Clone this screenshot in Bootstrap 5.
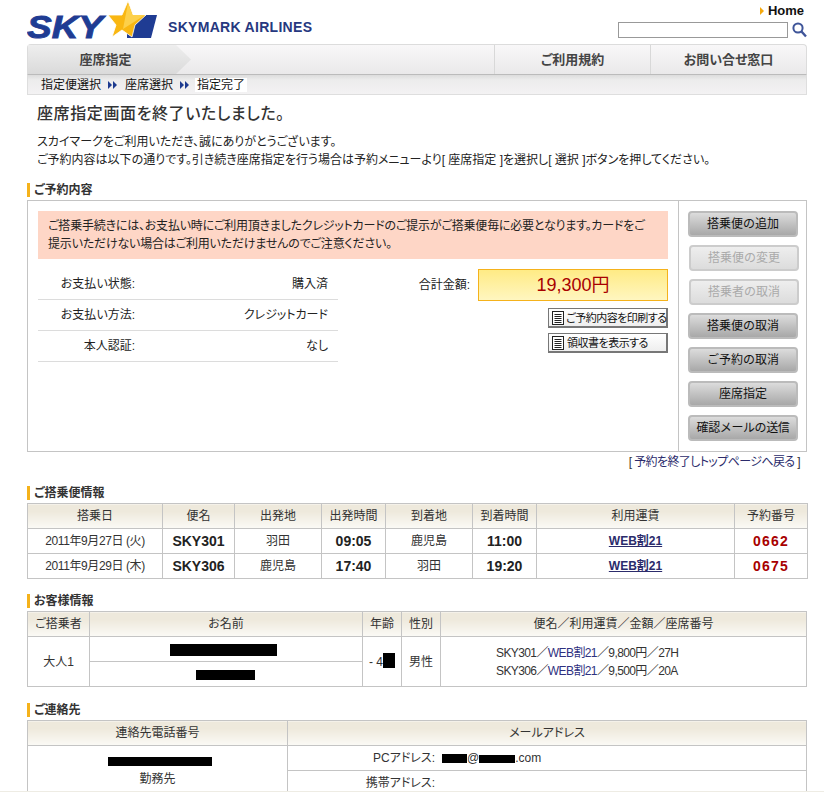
<!DOCTYPE html>
<html lang="ja"><head><meta charset="utf-8"><title>SKYMARK</title>
<link href="https://cdn.jsdelivr.net/npm/bootstrap@5.3.0/dist/css/bootstrap.min.css" rel="stylesheet">
<script src="https://cdn.jsdelivr.net/npm/bootstrap@5.3.0/dist/js/bootstrap.bundle.min.js"></script>
<style>
html,body{background:#fff}
body{font-family:"Liberation Sans","Noto Sans CJK JP",sans-serif;font-size:12px;line-height:18px;color:#222;font-feature-settings:"palt";overflow:hidden}
.clipper{height:792px;overflow:hidden;border-bottom:1px solid #eeece4;padding:0 17px 0 27px}
.top{height:44px}
.logo{width:300px;height:44px;display:block}
.home{font-size:13px;font-weight:700;color:#111;line-height:14px;padding-top:4px;padding-right:3px;text-decoration:none}
.home::before{content:"";display:inline-block;border-left:4px solid #f5a90e;border-top:4px solid transparent;border-bottom:4px solid transparent;margin-right:4px}
.srch{width:170px;height:16px;border:1px solid #999;background:#fff}
.gnav{height:31px;background:linear-gradient(#f8f7f8,#eae9ea);border:1px solid #dcdcdc;border-bottom:1px solid #bbb;border-radius:4px 4px 0 0;color:#444;font-weight:700;font-size:13px}
.gtab{width:163px;background:linear-gradient(#eee,#dadada);clip-path:polygon(0 0,148px 0,163px 50%,148px 100%,0 100%);padding-right:8px}
.gsp{width:303px}
.gitem{border-left:1px solid #d8d8d8}
.gw1{width:156px}.gw2{width:156px}
.sub{height:20px;background:linear-gradient(#dcdcdc,#ececec 25%,#f3f2f3);border:1px solid #dedede;border-top:0;padding-left:13px;color:#111}
.arw{margin:0 8px 0 7px;flex:none}
.cur{background:#fff;padding:0 2px;height:14px;line-height:14px;margin-left:-2px}
.ttl{font-size:16px;line-height:22px;font-weight:500;color:#333;margin:8px 0 0 10px;letter-spacing:.6px}
.lead-txt{margin:8px 0 0 10px;color:#222}
.sect{font-size:12px;line-height:14px;font-weight:700;color:#333;border-left:3px solid #f5b21b;padding-left:4px;margin:0}
.s1{margin-top:14px}.s2{margin-top:15px}.s3{margin-top:15px}.s4{margin-top:16px}
.bx{height:252px;border:1px solid #c4c4c4;margin-top:3px}
.bl{width:650px;padding:10px 10px 0 10px}
.br{width:129px;border-left:1px solid #c4c4c4;padding:10px 0 0 9px;gap:8px}
.notice{background:#fed6c6;height:48px;padding:6px 8px 0 10px;margin:0;color:#222;width:630px;letter-spacing:-.2px}
.dl{width:300px;margin-top:10px}
.dlr{height:31px;border-bottom:1px solid #dcdcdc;padding:0 10px;line-height:30px}
.dlk{width:87px;text-align:right}
.amt{margin-top:10px;width:250px}
.tot{width:190px;height:32px;border:1px solid #f5b21b;background:linear-gradient(#ffeb85,#fff6c0);color:#a80000;font-size:18px;text-align:center;line-height:31px;margin-left:8px}
.pr{width:120px;height:20px;border:1px solid #777;border-right:2px solid #777;border-bottom:2px solid #777;background:linear-gradient(#fff,#eee);color:#111;font-size:11px;line-height:16px;text-decoration:none;padding-left:2px;white-space:nowrap;letter-spacing:-.5px}
.pr1{margin-top:7px}.pr2{margin-top:5px}
.pr svg{margin-right:1px;flex:none}
.pr2 svg{margin-right:2px}
.fbtn{width:110px;height:26px;padding:0;border:2px solid #bbb;border-radius:4px;background:linear-gradient(#dcdcdc,#a8a8a8);color:#111;font-size:12px;line-height:20px;white-space:nowrap}
.fbtn.dis,.fbtn:disabled{background:linear-gradient(#eee,#dcdcdc);color:#aaa;border-color:#ccc;opacity:1;margin-left:1px}
.tight{letter-spacing:-.4px}
.back{text-align:right;color:#333;padding-right:7px;margin:1px 0 0;line-height:18px;letter-spacing:-.6px}
.back a{color:#2b2b6b;text-decoration:none}
.tlink{color:#2e3180;text-decoration:none}
.tt{table-layout:fixed;width:780px;margin:3px 0 0;border-collapse:collapse;font-size:12px}
.tt th,.tt td{border:1px solid #c4c4c4;height:25px;padding:0;text-align:center;vertical-align:middle;line-height:16px;color:#333;font-weight:400}
.tt th{background:linear-gradient(#eee9dc,#eee9dc 30%,#fbfaf6);}
.c135{width:135px}.c72{width:72px}.c87{width:87px}.c64{width:64px}.c87b{width:87px}.c64b{width:64px}.c198{width:198px}.c72b{width:73px}
.c62{width:62px}.c273{width:273px}.c39{width:39px}.c260{width:260px}
.dt{letter-spacing:-.4px}
.tt .bn{font-weight:700;font-size:14px;color:#222}
.tt .rsv{font-weight:700;font-size:14px;color:#a80000;letter-spacing:1.2px}
.fare{font-weight:700;color:#2b2b6b;text-decoration:underline}
.blk{display:inline-block;background:#000;vertical-align:middle}
.b1{width:107px;height:12px;margin-left:-6px}.b2{width:59px;height:10px;margin-left:-2px}.b3{width:12px;height:15px;margin-top:-3px}.b4{width:104px;height:9px;margin:-2px 0 2px 4px}.b5{width:25px;height:9px}.b6{width:36px;height:8px}
.tt td.fl{text-align:left;padding-left:55px;line-height:18px;letter-spacing:-.6px}
.tt td.cl{text-align:left}
.lbl{display:inline-block;width:147px;text-align:right;margin-right:7px}
</style></head><body>
<div class="clipper">
<header class="top d-flex justify-content-between">
<svg class="logo" viewBox="0 0 300 44" role="img" aria-label="SKY SKYMARK AIRLINES">
<polygon points="100,15 130,15 124,38 100,38" fill="#1f3c93"/>
<text x="0" y="38" font-family="Liberation Sans" font-size="32" font-weight="700" font-style="italic" fill="#1f3c93" stroke="#1f3c93" stroke-width=".9" textLength="76" lengthAdjust="spacingAndGlyphs">SKY</text>
<polygon points="101,1 106,15 119,15 108,25 105,37 95,30 85,37 89,25 81,15 95,15" fill="#f9b712" stroke="#fff" stroke-width=".8"/>
<polygon points="101,3 105.500,15 118,15 96,29" fill="#fdd04a"/>
<text x="141" y="32" font-family="Liberation Sans" font-size="14" font-weight="700" letter-spacing=".3" fill="#26387f">SKYMARK AIRLINES</text>
</svg>
<div class="d-flex flex-column align-items-end">
<a class="home" href="#">Home</a>
<div class="d-flex align-items-center gap-1 mt-1">
<input class="srch" type="text" aria-label="search">
<svg width="15" height="16" viewBox="0 0 15 16"><circle cx="6" cy="6" r="4.600" fill="none" stroke="#3f5599" stroke-width="2"/><path d="M9.500 9.500 14 14.500" stroke="#3f5599" stroke-width="2.400"/></svg>
</div></div>
</header>
<nav class="gnav d-flex">
<div class="gtab d-flex align-items-center justify-content-center">座席指定</div>
<div class="gsp"></div>
<div class="gitem gw1 d-flex align-items-center justify-content-center">ご利用規約</div>
<div class="gitem gw2 d-flex align-items-center justify-content-center">お問い合せ窓口</div>
</nav>
<div class="sub d-flex align-items-center">
<span>指定便選択</span><svg class="arw" width="9" height="8" viewBox="0 0 9 8"><path d="M0 0l4 4-4 4zM5 0l4 4-4 4z" fill="#1d3a8f"/></svg><span>座席選択</span><svg class="arw" width="9" height="8" viewBox="0 0 9 8"><path d="M0 0l4 4-4 4zM5 0l4 4-4 4z" fill="#1d3a8f"/></svg><span class="cur">指定完了</span>
</div>
<h1 class="ttl">座席指定画面を終了いたしました。</h1>
<p class="lead-txt">スカイマークをご利用いただき、誠にありがとうございます。<br>ご予約内容は以下の通りです。引き続き座席指定を行う場合は予約メニューより[ 座席指定 ]を選択し[ 選択 ]ボタンを押してください。</p>
<h2 class="sect s1">ご予約内容</h2>
<section class="bx d-flex">
<div class="bl">
<p class="notice">ご搭乗手続きには、お支払い時にご利用頂きましたクレジットカードのご提示がご搭乗便毎に必要となります。カードをご<br>提示いただけない場合はご利用いただけませんのでご注意ください。</p>
<div class="d-flex justify-content-between">
<div class="dl">
<div class="dlr d-flex justify-content-between"><span class="dlk">お支払い状態:</span><span>購入済</span></div>
<div class="dlr d-flex justify-content-between"><span class="dlk">お支払い方法:</span><span>クレジットカード</span></div>
<div class="dlr d-flex justify-content-between"><span class="dlk">本人認証:</span><span>なし</span></div>
</div>
<div class="amt d-flex flex-column align-items-end">
<div class="d-flex align-items-center"><span>合計金額:</span><div class="tot">19,300円</div></div>
<a class="pr pr1 d-flex align-items-center" href="#"><svg width="14" height="14" viewBox="0 0 14 14"><rect x="1.500" y=".5" width="11" height="13" fill="#fff" stroke="#222"/><path d="M3.500 3.500h7M3.500 5.500h7M3.500 7.500h7M3.500 9.500h7M3.500 11.500h7" stroke="#222"/></svg>ご予約内容を印刷する</a>
<a class="pr pr2 d-flex align-items-center" href="#"><svg width="14" height="14" viewBox="0 0 14 14"><rect x="1.500" y=".5" width="11" height="13" fill="#fff" stroke="#222"/><path d="M3.500 3.500h7M3.500 5.500h7M3.500 7.500h7M3.500 9.500h7M3.500 11.500h7" stroke="#222"/></svg>領収書を表示する</a>
</div></div></div>
<div class="br d-flex flex-column">
<button class="btn fbtn">搭乗便の追加</button>
<button class="btn fbtn dis" disabled>搭乗便の変更</button>
<button class="btn fbtn dis" disabled>搭乗者の取消</button>
<button class="btn fbtn">搭乗便の取消</button>
<button class="btn fbtn">ご予約の取消</button>
<button class="btn fbtn">座席指定</button>
<button class="btn fbtn tight">確認メールの送信</button>
</div>
</section>
<p class="back">[ <a href="#">予約を終了しトップページへ戻る</a> ]</p>
<h2 class="sect s2">ご搭乗便情報</h2>
<table class="tt"><colgroup><col class="c135"><col class="c72"><col class="c87"><col class="c64"><col class="c87b"><col class="c64b"><col class="c198"><col class="c72b"></colgroup>
<thead><tr><th>搭乗日</th><th>便名</th><th>出発地</th><th>出発時間</th><th>到着地</th><th>到着時間</th><th>利用運賃</th><th>予約番号</th></tr></thead>
<tbody>
<tr><td class="dt">2011年9月27日 (火)</td><td class="bn">SKY301</td><td>羽田</td><td class="bn">09:05</td><td>鹿児島</td><td class="bn">11:00</td><td><a class="fare" href="#">WEB割21</a></td><td class="rsv">0662</td></tr>
<tr><td class="dt">2011年9月29日 (木)</td><td class="bn">SKY306</td><td>鹿児島</td><td class="bn">17:40</td><td>羽田</td><td class="bn">19:20</td><td><a class="fare" href="#">WEB割21</a></td><td class="rsv">0675</td></tr>
</tbody></table>
<h2 class="sect s3">お客様情報</h2>
<table class="tt"><colgroup><col class="c62"><col class="c273"><col class="c39"><col class="c39"><col></colgroup>
<thead><tr><th>ご搭乗者</th><th>お名前</th><th>年齢</th><th>性別</th><th>便名／利用運賃／金額／座席番号</th></tr></thead>
<tbody>
<tr><td rowspan="2">大人1</td><td><span class="blk b1"></span></td><td rowspan="2">- 4<span class="blk b3"></span></td><td rowspan="2">男性</td><td rowspan="2" class="fl">SKY301／<a class="tlink" href="#">WEB割21</a>／9,800円／27H<br>SKY306／<a class="tlink" href="#">WEB割21</a>／9,500円／20A</td></tr>
<tr><td><span class="blk b2"></span></td></tr>
</tbody></table>
<h2 class="sect s4">ご連絡先</h2>
<table class="tt"><colgroup><col class="c260"><col></colgroup>
<thead><tr><th>連絡先電話番号</th><th>メールアドレス</th></tr></thead>
<tbody>
<tr><td rowspan="2"><span class="blk b4"></span><br>勤務先</td><td class="cl"><span class="lbl">PCアドレス:</span><span class="blk b5"></span>@<span class="blk b6"></span>.com</td></tr>
<tr><td class="cl"><span class="lbl">携帯アドレス:</span></td></tr>
</tbody></table>
</div>
</body></html>
